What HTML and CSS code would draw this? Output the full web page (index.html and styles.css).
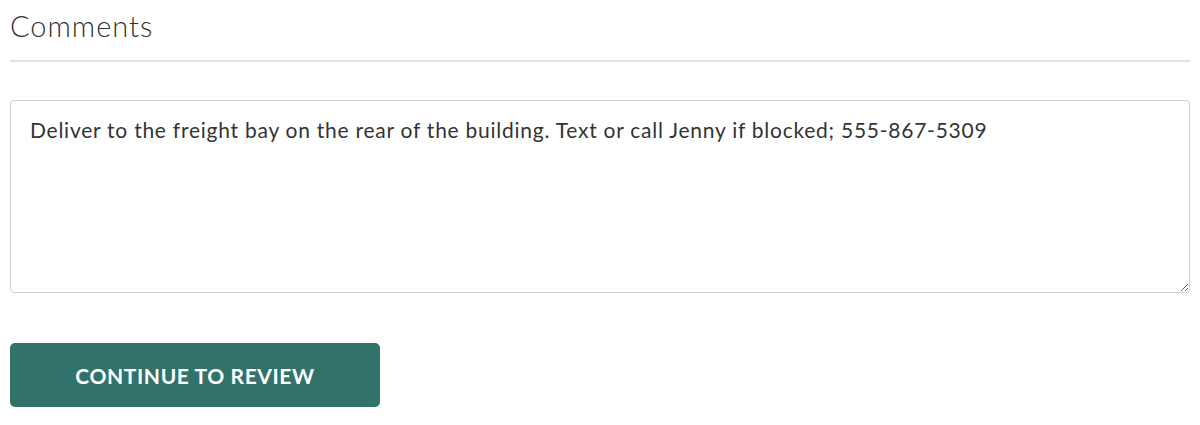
FILE: index.html
```html
<!DOCTYPE html>
<html>
<head>
<meta charset="utf-8">
<link rel="stylesheet" href="styles.css">
</head>
<body>
<div class="page">
  <h2 class="title">Comments</h2>
  <hr class="divider">
  <textarea class="comments">Deliver to the freight bay on the rear of the building. Text or call Jenny if blocked; 555-867-5309</textarea>
  <button class="continue">CONTINUE TO REVIEW</button>
</div>
</body>
</html>
```
FILE: styles.css
```css
html, body { margin: 0; padding: 0; background: #fff; }
.page {
  padding: 0 10px;
  display: flex;
  flex-direction: column;
  align-items: flex-start;
  font-family: Lato, "Open Sans", sans-serif;
  color: #333;
}
.title {
  margin: 9px 0 0 0;
  font-size: 29px;
  font-weight: 300;
  letter-spacing: 1px;
  line-height: 34px;
  color: #333;
}
.divider {
  align-self: stretch;
  border: 0;
  border-top: 2px solid #e3e3e3;
  margin: 17px 0 0 0;
}
.comments {
  align-self: stretch;
  box-sizing: border-box;
  height: 193px;
  margin-top: 38px;
  padding: 14px 19px;
  border: 1px solid #cfcfcf;
  border-radius: 4px;
  font-family: Lato, "Open Sans", sans-serif;
  font-size: 21px;
  letter-spacing: 0.75px;
  line-height: 30px;
  color: #333;
  background: #fff;
  outline: none;
}
.continue {
  margin-top: 50px;
  width: 370px;
  height: 64px;
  border: 0;
  border-radius: 5px;
  background: #31736a;
  color: #fff;
  font-family: Lato, "Open Sans", sans-serif;
  font-weight: 700;
  font-size: 21px;
  letter-spacing: 0.6px;
  padding: 0;
}
```
